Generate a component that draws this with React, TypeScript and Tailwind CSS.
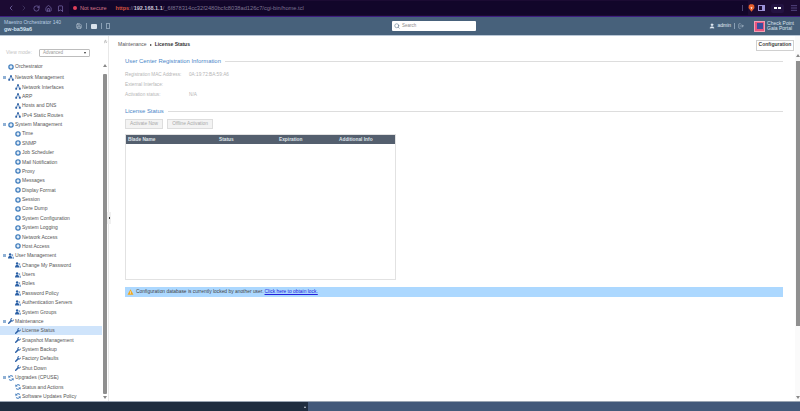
import { Search, User, LogOut, Save, ChevronLeft, ChevronRight, ChevronsUp, RotateCw, Home, Bookmark, Menu } from "lucide-react";

type IconKind = "gear" | "net" | "users" | "wrench" | "sync";

function TreeIcon({ kind }: { kind: IconKind }) {
  if (kind === "gear") {
    return (
      <svg viewBox="0 0 10 10" className="h-[6px] w-[6px] shrink-0">
        <circle cx="5" cy="5" r="3.5" fill="none" stroke="#3f7dbd" strokeWidth="2.2" />
        <circle cx="5" cy="5" r="1.6" fill="#d6e4f3" />
      </svg>
    );
  }
  if (kind === "net") {
    return (
      <svg viewBox="0 0 10 10" className="h-[6px] w-[6px] shrink-0" fill="#2a5fa5">
        <rect x="3.5" y="0.5" width="3" height="3" />
        <rect x="0.5" y="6.5" width="3" height="3" />
        <rect x="6.5" y="6.5" width="3" height="3" />
        <path d="M5 3v2M2 6.5V5h6v1.5" stroke="#2a5fa5" fill="none" />
      </svg>
    );
  }
  if (kind === "users") {
    return (
      <svg viewBox="0 0 10 10" className="h-[6px] w-[6px] shrink-0" fill="#2a5fa5">
        <circle cx="3.5" cy="2.5" r="2" />
        <path d="M0 9c0-3 1.500-4 3.500-4S7 6 7 9z" />
        <circle cx="7.300" cy="3.500" r="1.500" fill="#6f9bcf" />
        <path d="M7.500 9.500c0-2 .5-3 .2-4 1.300.1 2.300 1 2.300 4z" fill="#6f9bcf" />
      </svg>
    );
  }
  if (kind === "wrench") {
    return (
      <svg viewBox="0 0 10 10" className="h-[6px] w-[6px] shrink-0" fill="#2a5fa5">
        <path d="M9.600 2.200 7.800 4 6 3.600 5.600 1.800 7.400.2C5.800-.3 4 .8 3.900 2.600c0 .5 0 .9.2 1.200L.4 7.900c-.6.7-.5 1.300 0 1.700.5.4 1 .4 1.600-.1l4-3.600c1.900.6 4.200-1.200 3.600-3.700z" />
      </svg>
    );
  }
  return (
    <svg viewBox="0 0 10 10" className="h-[6px] w-[6px] shrink-0" fill="none" stroke="#2f6fb5" strokeWidth="1.600">
      <path d="M8.500 3A4 4 0 0 0 1.500 3.500M1.500 7a4 4 0 0 0 7-.5" />
      <path d="M1 1v3h3M9 9V6H6" strokeWidth="1" />
    </svg>
  );
}

function Parent({ label, kind, toggle = true }: { label: string; kind: IconKind; toggle?: boolean }) {
  return (
    <div className="flex h-[9.44px] items-center whitespace-nowrap pl-[3px]">
      <span className="flex w-[4px] shrink-0 items-center">
        {toggle && <span className="h-[3px] w-[3px] bg-[#8fb0d4]" />}
      </span>
      <span className="ml-[1px] flex w-[6px] justify-center">
        <TreeIcon kind={kind} />
      </span>
      <span className="ml-[1px] text-[5px] leading-none text-[#555]">{label}</span>
    </div>
  );
}

function Leaf({ label, kind, active = false }: { label: string; kind: IconKind; active?: boolean }) {
  return (
    <div
      className={`flex h-[9.44px] items-center whitespace-nowrap pl-[15px] ${active ? "bg-[#cfe4fb]" : ""}`}
    >
      <TreeIcon kind={kind} />
      <span className="ml-[1px] text-[5px] leading-none text-[#555]">{label}</span>
    </div>
  );
}

function Legend({ label }: { label: string }) {
  return (
    <div className="flex items-center gap-[4px]">
      <span className="text-[5.900px] leading-none text-[#4a86c8]">{label}</span>
      <span className="h-px flex-1 bg-[#dddddd]" />
    </div>
  );
}

function Field({ label, value }: { label: string; value?: string }) {
  return (
    <div className="flex h-[9.600px] items-center text-[4.700px] leading-none text-[#b5b5b5]">
      <span className="w-[64px]">{label}</span>
      <span>{value}</span>
    </div>
  );
}

function Arrow({ up = false }: { up?: boolean }) {
  return (
    <span
      className={`h-0 w-0 shrink-0 border-x-[2px] border-x-transparent ${up ? "border-b-[3px] border-b-[#888]" : "border-t-[3px] border-t-[#888]"}`}
    />
  );
}

export default function App() {
  return (
    <div className="flex h-[411px] w-[800px] flex-col overflow-hidden bg-white font-['Liberation_Sans',sans-serif]">
      {/* browser chrome */}
      <div className="flex h-[17px] shrink-0 items-center border-b border-[#3d1f80] bg-[#1c0b33] pl-[7px] pr-[2px]">
        <div className="flex w-[62px] shrink-0 items-center gap-[5px] text-[#8d7fc4]">
          <ChevronLeft size={8} />
          <ChevronRight size={8} className="text-[#4d4470]" />
          <RotateCw size={7} />
          <Home size={7} />
          <Bookmark size={7} />
        </div>
        <div className="flex h-[14px] flex-1 items-center rounded-l-[3px] bg-[#12062a] pl-[4px] text-[5.500px]">
          <span className="h-[4px] w-[4px] rounded-full bg-[#e0405a]" />
          <span className="ml-[3px] text-[#d97a8a]">Not secure</span>
          <span className="ml-[9px] font-bold text-[#d9553f]">https</span>
          <span className="text-[#7f7592]">://</span>
          <span className="font-bold text-[#c9c3d6]">192.168.1.1</span>
          <span className="text-[5.700px] text-[#7f7592]">/_6f878314cc32f2480bcfc8038ad126c7/cgi-bin/home.tcl</span>
          <span className="ml-auto mr-[5px] h-[6px] w-px bg-[#4d4470]" />
          <svg viewBox="0 0 10 12" className="mr-[-7px] h-[8px] w-[7px]">
            <path d="M1 2 3 .5h4L9 2l.5 4L5 11.500.5 6z" fill="#e8602c" />
            <path d="M3.500 5h3L5 8z" fill="#fff" />
          </svg>
        </div>
        <div className="ml-[10px] flex items-center gap-[6px] text-[#9d92d8]">
          <span className="h-[6px] w-[7px] border border-[#9d92d8] border-r-[3px]" />
          <span className="flex h-[9px] w-[13px] items-center justify-center gap-px rounded-[2px] bg-[#241342]">
            <span className="h-[2px] w-[3px] bg-white" />
            <span className="h-[2px] w-[3px] bg-white" />
          </span>
          <Menu size={8} className="text-[#6f63a8]" />
        </div>
      </div>

      {/* app header */}
      <div className="flex h-[19px] shrink-0 items-center border-b border-[#b9c7d6] bg-[#47617b] pl-[4px] pr-[6px] text-white">
        <div className="flex w-[72px] shrink-0 flex-col gap-[2px] leading-none">
          <span className="text-[5px] text-[#b9cde2]">Maestro Orchestrator 140</span>
          <span className="text-[5.500px] font-bold text-[#cfe0f0]">gw-ba59a6</span>
        </div>
        <div className="flex w-[34px] shrink-0 items-center gap-[4px] text-[#d8e2ec]">
          <Save size={6} />
          <span className="h-[6px] w-px bg-[#8ba0b5]" />
          <span className="h-[5px] w-[6px] rounded-[1px] bg-[#d8e2ec]" />
          <span className="h-[6px] w-px bg-[#8ba0b5]" />
          <span className="h-[6px] w-[4px] border border-[#8ba0b5]" />
        </div>
        <div className="ml-[282px] flex h-[10px] w-[84px] items-center rounded-[1px] bg-white pl-[2px] text-[#8c8c8c]">
          <Search size={6} className="text-[#47617b]" />
          <span className="ml-[2px] text-[4.500px]">Search</span>
        </div>
        <div className="ml-auto flex items-center">
          <User size={6} fill="#e3ebf3" className="text-[#e3ebf3]" />
          <span className="ml-[2px] text-[5px] text-[#e3ebf3]">admin</span>
          <span className="ml-[3px] h-[6px] w-px bg-[#8ba0b5]" />
          <LogOut size={6} className="ml-[3px] text-[#c7d4e2]" />
          <span className="ml-[10px] flex h-[11px] w-[11px] items-center justify-center border border-[#f2a0b5] bg-[#e9557f]">
            <span className="h-[6px] w-[6px] bg-[#3d4f9e]" />
          </span>
          <div className="ml-[2px] flex flex-col text-[5px] leading-[5px] text-[#d8e2ec]">
            <span>Check Point</span>
            <span>Gaia Portal</span>
          </div>
        </div>
      </div>

      <div className="flex min-h-0 flex-1">
        {/* sidebar */}
        <aside className="relative flex w-[109px] shrink-0 border-r border-[#e8e8e8]">
          <div className="flex w-[102px] shrink-0 flex-col">
            <div className="flex h-[21px] shrink-0 items-end justify-between">
              <span className="mb-[1px] ml-[6px] text-[5px] text-[#c4c4c4]">View mode:</span>
              <span className="mr-[12px] flex h-[8px] w-[51px] items-center justify-between rounded-[1px] border border-[#bdbdbd] px-[3px] text-[4.500px] text-[#999]">
                Advanced
                <span className="h-0 w-0 border-x-[1.500px] border-t-[2px] border-x-transparent border-t-[#333]" />
              </span>
            </div>
            <div className="mt-[5px] flex flex-col overflow-hidden">
              <Parent label="Orchestrator" kind="gear" toggle={false} />
              <div className="h-[1.600px] shrink-0" />
              <Parent label="Network Management" kind="net" />
              <Leaf label="Network Interfaces" kind="net" />
              <Leaf label="ARP" kind="net" />
              <Leaf label="Hosts and DNS" kind="net" />
              <Leaf label="IPv4 Static Routes" kind="net" />
              <Parent label="System Management" kind="gear" />
              <Leaf label="Time" kind="gear" />
              <Leaf label="SNMP" kind="gear" />
              <Leaf label="Job Scheduler" kind="gear" />
              <Leaf label="Mail Notification" kind="gear" />
              <Leaf label="Proxy" kind="gear" />
              <Leaf label="Messages" kind="gear" />
              <Leaf label="Display Format" kind="gear" />
              <Leaf label="Session" kind="gear" />
              <Leaf label="Core Dump" kind="gear" />
              <Leaf label="System Configuration" kind="gear" />
              <Leaf label="System Logging" kind="gear" />
              <Leaf label="Network Access" kind="gear" />
              <Leaf label="Host Access" kind="gear" />
              <Parent label="User Management" kind="users" />
              <Leaf label="Change My Password" kind="users" />
              <Leaf label="Users" kind="users" />
              <Leaf label="Roles" kind="users" />
              <Leaf label="Password Policy" kind="users" />
              <Leaf label="Authentication Servers" kind="users" />
              <Leaf label="System Groups" kind="users" />
              <Parent label="Maintenance" kind="wrench" />
              <Leaf label="License Status" kind="wrench" active />
              <Leaf label="Snapshot Management" kind="wrench" />
              <Leaf label="System Backup" kind="wrench" />
              <Leaf label="Factory Defaults" kind="wrench" />
              <Leaf label="Shut Down" kind="wrench" />
              <Parent label="Upgrades (CPUSE)" kind="sync" />
              <Leaf label="Status and Actions" kind="sync" />
              <Leaf label="Software Updates Policy" kind="sync" />
            </div>
          </div>
          <div className="flex w-[6px] shrink-0 flex-col items-center pt-[3px] pb-[2px]">
            <ChevronsUp size={5} className="text-[#555]" />
            <div className="h-[20px] shrink-0" />
            <Arrow up />
            <div className="mb-[2px] mt-[7px] w-[4px] flex-1 rounded-[1px] bg-[#8f8f8f]" />
            <Arrow />
          </div>
          {/* collapse handle on the panel edge */}
          <div className="absolute right-[-3px] top-[176px] flex h-[12px] w-[4px] items-center justify-center bg-[#f0f0f0]">
            <span className="h-[2px] w-[1px] bg-[#333]" />
          </div>
        </aside>

        {/* main area */}
        <main className="flex min-w-0 flex-1 flex-col pl-[8px] pr-px">
          <div className="flex h-[18px] shrink-0 items-center justify-between text-[5px]">
            <div className="ml-px flex items-center text-[#555]">
              <span>Maintenance</span>
              <span className="mx-[3px] h-0 w-0 border-y-[1.500px] border-l-[2px] border-y-transparent border-l-[#333]" />
              <span className="font-bold text-[#333]">License Status</span>
            </div>
            <span className="flex h-[11px] w-[38px] items-center justify-center border border-[#d0d0d0] text-[5px] font-bold text-[#444]">
              Configuration
            </span>
          </div>
          <div className="mr-[11px] mt-[5px] pl-[8px]">
            <Legend label="User Center Registration Information" />
            <div className="mt-[6px]">
              <Field label="Registration MAC Address:" value="0A:19:72:BA:59:A6" />
              <Field label="External Interface:" />
              <Field label="Activation status:" value="N/A" />
            </div>
            <div className="mt-[9px]">
              <Legend label="License Status" />
            </div>
            <div className="mt-[4px] flex gap-[4px]">
              <span className="flex h-[10px] w-[38px] items-center justify-center border border-[#dddddd] bg-[#f3f3f3] text-[4.800px] text-[#a8a8a8]">
                Activate Now
              </span>
              <span className="flex h-[10px] w-[46px] items-center justify-center border border-[#dddddd] bg-[#f3f3f3] text-[4.800px] text-[#a8a8a8]">
                Offline Activation
              </span>
            </div>
          </div>
          <div className="ml-[8px] mt-[5px] flex h-[146px] w-[271px] flex-col border border-[#e2e2e2]">
            <div className="grid h-[9px] shrink-0 grid-cols-[91px_60px_60px_1fr] items-center bg-[#545f6e] pl-[2px] text-[4.800px] font-bold text-[#dfe3e8]">
              <span>Blade Name</span>
              <span>Status</span>
              <span>Expiration</span>
              <span>Additional Info</span>
            </div>
          </div>
          <div className="ml-[8px] mr-[11px] mt-[7px] flex h-[10px] shrink-0 items-center bg-[#acd8ff] pl-[2px] text-[4.900px] text-[#444]">
            <svg viewBox="0 0 12 11" className="h-[6px] w-[7px]">
              <path d="M6 .5 11.500 10.500H.5z" fill="#f2a81d" />
              <path d="M5.500 4h1v3.500h-1zM5.500 8h1v1h-1z" fill="#fff" />
            </svg>
            <span className="ml-[2px]">Configuration database is currently locked by another user.</span>
            <span className="ml-[1px] text-[#2222dd] underline">Click here to obtain lock.</span>
          </div>
        </main>

        {/* page scrollbar */}
        <div className="flex w-[5px] shrink-0 flex-col items-center bg-[#fafafa] pt-[18px] pb-[2px]">
          <Arrow up />
          <div className="mt-[4px] h-[265px] w-[4px] bg-[#8f8f8f]" />
          <div className="flex-1" />
          <Arrow />
        </div>
      </div>

      {/* bottom bar */}
      <div className="flex h-[10px] shrink-0 border-t border-[#9aa5b3] bg-[#43597a]">
        <div className="flex w-[308px] items-center justify-end bg-[#1f2d3f] pr-[2px]">
          <span className="h-0 w-0 border-x-[1.500px] border-b-[2px] border-x-transparent border-b-[#c9d1da]" />
        </div>
      </div>
    </div>
  );
}
